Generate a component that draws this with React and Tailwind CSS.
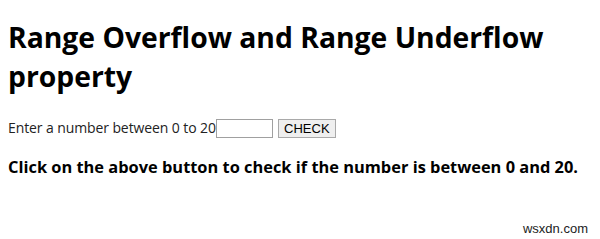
import React from "react";

const App = () => {
  return (
    <div className="relative w-[600px] h-[239px] bg-white text-black font-['Open_Sans',sans-serif] p-2 overflow-hidden">
      <h1 className="text-[28.3px] leading-[39px] font-bold mt-[10px]">
        Range Overflow and Range Underflow property
      </h1>
      <div className="mt-[23px] flex items-start text-[14px] text-[#222]">
        <span className="leading-[17px] tracking-[-0.1px]">Enter a number between 0 to 20</span>
        <input
          type="number"
          className="w-[57px] h-[19px] border border-[#a0a0a0] bg-white"
        />
        <button className="ml-[5px] w-[58px] h-[19px] border border-[#a9a9a9] bg-[#efefef] text-[13px] leading-[15px] text-black font-['Liberation_Sans',sans-serif]">
          CHECK
        </button>
      </div>
      <h3 className="mt-[18px] text-[16.4px] leading-[22px] font-bold">
        Click on the above button to check if the number is between 0 and 20.
      </h3>
      <div className="absolute right-[12px] bottom-[3px] text-[13px] leading-[15px] text-[#222] font-['Liberation_Sans',sans-serif]">
        wsxdn.com
      </div>
    </div>
  );
};

export default App;
